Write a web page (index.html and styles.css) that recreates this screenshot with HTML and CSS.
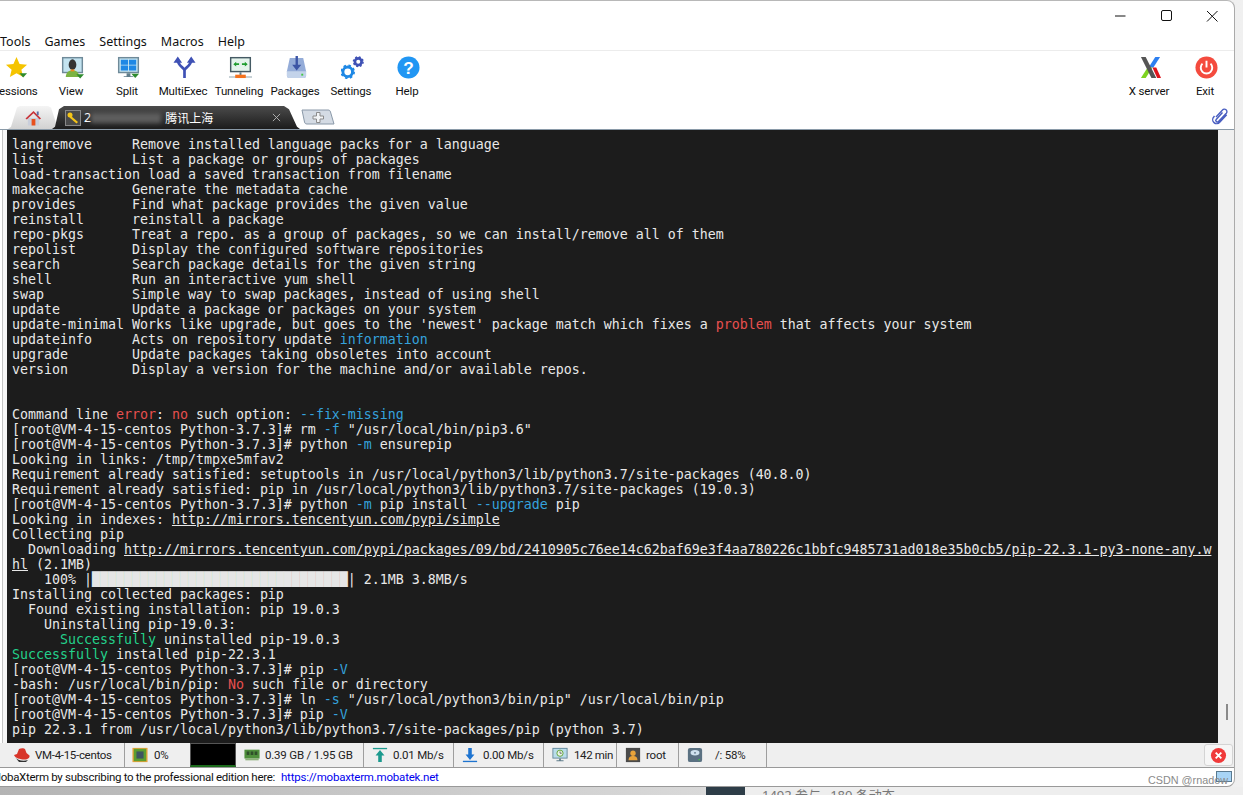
FILE: index.html
```html
<!DOCTYPE html>
<html lang="en">
<head>
    <meta charset="UTF-8">
    <title>MobaXterm</title>
    <link rel="stylesheet" href="styles.css">
</head>
<body>
    <div class="window">
        <div class="titlebar">
            <svg class="win-btn" viewBox="0 0 46 30"><path d="M20 15h10.500" stroke="#111" fill="none"/></svg>
            <svg class="win-btn" viewBox="0 0 46 30"><rect x="20.500" y="9.500" width="10" height="10" rx="1.500" stroke="#111" fill="none"/></svg>
            <svg class="win-btn" viewBox="0 0 46 30"><path d="M20 10l10.500 10.500M30.500 10L20 20.500" stroke="#111" fill="none"/></svg>
        </div>

        <div class="menubar">
            <span>Tools</span><span>Games</span><span>Settings</span><span>Macros</span><span>Help</span>
        </div>

        <div class="toolbar">
            <div class="tool">
                <svg viewBox="0 0 24 24"><path d="M12 1l3.200 7.300 7.800.8-5.900 5.200 1.800 7.700L12 18l-6.900 4 1.800-7.700L1 9.100l7.800-.8z" fill="#f5c400"/><path d="M15 18h8l-4 4.500z" fill="#2e8b2e"/></svg>
                <span>Sessions</span>
            </div>
            <div class="tool">
                <svg viewBox="0 0 24 24"><rect x="1" y="1" width="22" height="17" fill="#6f8a99"/><rect x="2.500" y="2.500" width="19" height="14" fill="#c3e3f0"/><path d="M5 22c0-5 3-7 7-7s7 2 7 7z" fill="#7cb342"/><ellipse cx="12" cy="9" rx="4" ry="5.500" fill="#333"/><rect x="10" y="14" width="4" height="2" fill="#ef8a1f"/><path d="M16 19h8l-4 4.500z" fill="#2e8b2e"/></svg>
                <span>View</span>
            </div>
            <div class="tool">
                <svg viewBox="0 0 24 24"><rect x="1" y="1" width="22" height="17" fill="#6f8a99"/><rect x="2.500" y="2.500" width="19" height="14" fill="#c3e3f0"/><path d="M4 4h7.500v5H4zM12.500 4H20v5h-7.500zM4 10h7.500v5H4zM12.500 10H20v5h-7.500z" fill="#1e88e5"/><path d="M10 18h4v3h-4zM7 21h10v1H7z" fill="#607d8b"/><path d="M15 18.500h8l-4 4.500z" fill="#2e8b2e"/></svg>
                <span>Split</span>
            </div>
            <div class="tool">
                <svg viewBox="0 0 24 24"><path d="M12 23v-8c0-3-7-4-7-11M12 15c0-3 7-4 7-11" stroke="#3f51b5" stroke-width="2.800" fill="none"/><path d="M0.500 7L5 0.500 9.500 7zM14.500 7L19 0.500 23.500 7z" fill="#3f51b5"/></svg>
                <span>MultiExec</span>
            </div>
            <div class="tool">
                <svg viewBox="0 0 24 24"><rect x="1" y="1" width="22" height="16" fill="#455a64"/><rect x="2.500" y="2.500" width="19" height="13" fill="#e4f3ec"/><path d="M4.500 8.500l3-2.500v1.500h3v2h-3V11zM19.500 8.500l-3-2.500v1.500h-3v2h3V11z" fill="#1f9d2f"/><path d="M0 21.500h24v1H0z" fill="#90a4ae"/><path d="M11 17h2v3h-2z" fill="#607d8b"/><rect x="6.500" y="19.500" width="11" height="3.500" fill="#f4721e"/></svg>
                <span>Tunneling</span>
            </div>
            <div class="tool">
                <svg viewBox="0 0 24 24"><path d="M5 2h14l3 14v4a3 3 0 0 1-3 3H5a3 3 0 0 1-3-3v-4z" fill="#94acd8"/><path d="M2 16h20v4a3 3 0 0 1-3 3H5a3 3 0 0 1-3-3z" fill="#c3d3ea"/><path d="M11 0h2.500v9H17l-4.800 6-4.700-6H11z" fill="#3c55a5"/><rect x="17" y="18.500" width="2" height="2" fill="#43c943"/></svg>
                <span>Packages</span>
            </div>
            <div class="tool">
                <svg viewBox="0 0 24 24"><circle cx="7" cy="16.500" r="5" fill="none" stroke="#1e88e5" stroke-width="3"/><circle cx="7" cy="16.500" r="6.700" fill="none" stroke="#1e88e5" stroke-width="1.800" stroke-dasharray="2.600 2.660"/><circle cx="18" cy="6" r="3.500" fill="none" stroke="#3f51b5" stroke-width="2.800"/><circle cx="18" cy="6" r="5" fill="none" stroke="#3f51b5" stroke-width="1.600" stroke-dasharray="2 1.930"/></svg>
                <span>Settings</span>
            </div>
            <div class="tool">
                <svg viewBox="0 0 24 24"><circle cx="12" cy="12" r="11.500" fill="#2196f3"/><text x="12" y="18.500" class="help-mark">?</text></svg>
                <span>Help</span>
            </div>
            <div class="tool-gap"></div>
            <div class="tool">
                <svg viewBox="0 0 24 24"><path d="M17 1h5l-7 11h-5z" fill="#2d7ff0"/><path d="M9 12h5L7 23H2z" fill="#7ed321"/><path d="M14 12h4l5 11h-4z" fill="#e0141c"/><path d="M2 1h5l11 22h-5z" fill="#555"/></svg>
                <span>X server</span>
            </div>
            <div class="tool">
                <svg viewBox="0 0 24 24"><circle cx="12" cy="12" r="11.500" fill="#f44b3e"/><path d="M7.800 8a6 6 0 1 0 8.400 0" stroke="#fff" stroke-width="2" fill="none"/><path d="M12 5v7" stroke="#fff" stroke-width="2"/></svg>
                <span>Exit</span>
            </div>
        </div>

        <div class="tabs">
            <div class="tab-home">
                <svg class="home-icon" viewBox="0 0 18 18"><path d="M3 9h12v8H3z" fill="#c9cedb"/><path d="M7 10h4v7H7z" fill="#e8501e"/><path d="M0.500 9.500L9 1.500l8 8-1.500 1L9 4l-7 6.500z" fill="#c8343a"/><path d="M12.500 2h2v4h-2z" fill="#5a6fa8"/></svg>
            </div>
            <div class="tab-active">
                <svg class="key-icon" viewBox="0 0 16 16"><rect x="0.500" y="0.500" width="15" height="15" fill="#4a4a4a" stroke="#888"/><circle cx="5" cy="5" r="2.500" fill="#f5c518"/><path d="M6 6l7 6-1.500 1.500-7-6z" fill="#f5c518"/></svg>
                <span class="tab-num">2</span>
                <span class="tab-mask"></span>
                <span class="tab-name">腾讯上海</span>
                <svg class="tab-close" viewBox="0 0 10 10"><path d="M1 1l8 8M9 1l-8 8" stroke="#b8b8b8" fill="none"/></svg>
            </div>
            <svg class="tab-plus" viewBox="0 0 34 16"><path d="M1 1h26c1.500 0 2 .5 2.500 2L33 15H6C4.500 15 4 14.500 3.500 13z" fill="#d4dbe4" stroke="#8a98a8"/><path d="M15.500 3.500h3.500v3.500h3.500v3H19v3.500h-3.500V10H12V7h3.500z" fill="#f2f4f6" stroke="#8b8b8b"/></svg>
            <svg class="clip-icon" viewBox="0 0 18 18"><path d="M5 10l6.500-7a2.500 2.500 0 0 1 3.800 3.300L7.500 14.500a1.500 1.500 0 0 1-2.300-2l6.300-7M3.500 9L2.700 10a4 4 0 0 0 6 5.300l7-7.500" stroke="#4a5fc1" stroke-width="1.400" fill="none"/></svg>
        </div>

        <div class="term-row">
            <div class="gutter"></div>
<pre class="terminal">langremove     Remove installed language packs for a language
list           List a package or groups of packages
load-transaction load a saved transaction from filename
makecache      Generate the metadata cache
provides       Find what package provides the given value
reinstall      reinstall a package
repo-pkgs      Treat a repo. as a group of packages, so we can install/remove all of them
repolist       Display the configured software repositories
search         Search package details for the given string
shell          Run an interactive yum shell
swap           Simple way to swap packages, instead of using shell
update         Update a package or packages on your system
update-minimal Works like upgrade, but goes to the 'newest' package match which fixes a <span class="t-red">problem</span> that affects your system
updateinfo     Acts on repository update <span class="t-cyan">information</span>
upgrade        Update packages taking obsoletes into account
version        Display a version for the machine and/or available repos.


Command line <span class="t-red">error</span>: <span class="t-red">no</span> such option: <span class="t-cyan">--fix-missing</span>
[root@VM-4-15-centos Python-3.7.3]# rm <span class="t-cyan">-f</span> "/usr/local/bin/pip3.6"
[root@VM-4-15-centos Python-3.7.3]# python <span class="t-cyan">-m</span> ensurepip
Looking in links: /tmp/tmpxe5mfav2
Requirement already satisfied: setuptools in /usr/local/python3/lib/python3.7/site-packages (40.8.0)
Requirement already satisfied: pip in /usr/local/python3/lib/python3.7/site-packages (19.0.3)
[root@VM-4-15-centos Python-3.7.3]# python <span class="t-cyan">-m</span> pip install <span class="t-cyan">--upgrade</span> pip
Looking in indexes: <u>http://mirrors.tencentyun.com/pypi/simple</u>
Collecting pip
  Downloading <u>http://mirrors.tencentyun.com/pypi/packages/09/bd/2410905c76ee14c62baf69e3f4aa780226c1bbfc9485731ad018e35b0cb5/pip-22.3.1-py3-none-any.w</u>
<u>hl</u> (2.1MB)
    100% |<span class="t-bar">████████████████████████████████</span>| 2.1MB 3.8MB/s
Installing collected packages: pip
  Found existing installation: pip 19.0.3
    Uninstalling pip-19.0.3:
      <span class="t-green">Successfully</span> uninstalled pip-19.0.3
<span class="t-green">Successfully</span> installed pip-22.3.1
[root@VM-4-15-centos Python-3.7.3]# pip <span class="t-cyan">-V</span>
-bash: /usr/local/bin/pip: <span class="t-red">No</span> such file or directory
[root@VM-4-15-centos Python-3.7.3]# ln <span class="t-cyan">-s</span> "/usr/local/python3/bin/pip" /usr/local/bin/pip
[root@VM-4-15-centos Python-3.7.3]# pip <span class="t-cyan">-V</span>
pip 22.3.1 from /usr/local/python3/lib/python3.7/site-packages/pip (python 3.7)</pre>
            <div class="scrollbar"><div class="scroll-thumb"></div></div>
        </div>

        <div class="statusbar">
            <div class="stat stat-host">
                <svg viewBox="0 0 18 18"><path d="M1 9l3-1 2-5c2-1 5-1 6 0l1.500 4 3 2.500c.5 2-1.500 4-5 4C7 13.500 2 12 1 9z" fill="#d8352a"/><path d="M2 11c2 3 8 5 13 3l-2 2H6z" fill="#333"/></svg>
                <span>VM-4-15-centos</span>
            </div>
            <div class="stat stat-cpu">
                <svg viewBox="0 0 18 18"><rect x="0.500" y="1" width="17" height="16" fill="#e8a33a"/><rect x="2" y="2" width="14" height="14" fill="#5d9e2f"/><rect x="5" y="5" width="8" height="8" fill="#3f5560"/></svg>
                <span>0%</span>
                <div class="cpu-graph"></div>
            </div>
            <div class="stat stat-ram">
                <svg viewBox="0 0 18 18"><rect x="0.500" y="3" width="17" height="10" fill="#4f8f3c"/><path d="M3 5h3v4H3zM7.500 5h3v4h-3zM12 5h3v4h-3z" fill="#2f4f2a"/><rect x="1.500" y="13" width="15" height="2" fill="#8db27a"/></svg>
                <span>0.39 GB / 1.95 GB</span>
            </div>
            <div class="stat stat-up">
                <svg viewBox="0 0 18 18"><path d="M1 1h16v1.500H1z" fill="#1c9a8e"/><path d="M9 3.500l5 6h-3V17H7V9.500H4z" fill="#1c9a8e"/></svg>
                <span>0.01 Mb/s</span>
            </div>
            <div class="stat stat-down">
                <svg viewBox="0 0 18 18"><path d="M7 1h4v7.500h3l-5 6-5-6h3z" fill="#1e74d0"/><path d="M1 15.500h16V17H1z" fill="#1e74d0"/></svg>
                <span>0.00 Mb/s</span>
            </div>
            <div class="stat stat-time">
                <svg viewBox="0 0 18 18"><rect x="0.500" y="1" width="17" height="12" fill="#5f8496"/><rect x="1.500" y="2" width="15" height="10" fill="#b9dcea"/><circle cx="9" cy="7" r="3.500" fill="#e8f4e4" stroke="#5d9e2f"/><path d="M9 5v2h2" stroke="#444" stroke-width=".8" fill="none"/><path d="M8 13h2v2H8zM5 15h8v1H5z" fill="#607d8b"/></svg>
                <span>142 min</span>
            </div>
            <div class="stat stat-user">
                <svg viewBox="0 0 18 18"><rect x="1" y="1" width="16" height="16" fill="#4a4a4a"/><circle cx="9" cy="7" r="3" fill="#e8a33a"/><path d="M4 15c0-4 2-5 5-5s5 1 5 5z" fill="#e8a33a"/></svg>
                <span>root</span>
            </div>
            <div class="stat stat-disk">
                <svg viewBox="0 0 18 18"><rect x="1" y="1" width="16" height="16" rx="2.500" fill="#5a7182"/><ellipse cx="9" cy="6.500" rx="5" ry="3" fill="#cfe2ee"/><circle cx="9" cy="6.500" r="1" fill="#5a7182"/><rect x="13" y="13.500" width="1.500" height="1.500" fill="#43c943"/></svg>
                <span>/: 58%</span>
            </div>
            <div class="stat-close">
                <svg viewBox="0 0 18 18"><circle cx="9" cy="9" r="8" fill="#f03a3a"/><path d="M6 6l6 6M12 6l-6 6" stroke="#fff" stroke-width="2"/></svg>
            </div>
        </div>

        <div class="notice">
            <span class="notice-text">MobaXterm by subscribing to the professional edition here:</span>
            <span class="notice-link">https://mobaxterm.mobatek.net</span>
            <div class="task-icon"></div>
            <div class="watermark">CSDN @rnadow</div>
        </div>
    </div>

    <div class="behind">
        <div class="behind-thumb"></div>
        <span>1492 参与</span>
        <span>180 条动态</span>
    </div>
</body>
</html>
```
FILE: styles.css
```css
* {
    margin: 0;
    padding: 0;
    box-sizing: border-box;
}

html, body {
    height: 795px;
    overflow: hidden;
}

body {
    width: 1243px;
    background: linear-gradient(to right, #b4b4b4, #d8d8d8 55%, #f0f0f0);
    font-family: 'Noto Sans', 'Noto Sans CJK SC', sans-serif;
    color: #111;
}

.window {
    width: 1235px;
    height: 787px;
    display: flex;
    flex-direction: column;
    background: #fff;
    border-top: 1px solid #b8b8b8;
    border-right: 1px solid #aaa;
    border-bottom: 1px solid #999;
    border-radius: 0 8px 8px 0;
    overflow: hidden;
}

.titlebar {
    height: 32px;
    display: flex;
    justify-content: flex-end;
    align-items: flex-start;
    padding-right: 1px;
}

.win-btn {
    width: 46px;
    height: 30px;
}

.menubar {
    height: 18px;
    display: flex;
    gap: 14px;
    align-items: center;
    font-size: 12.5px;
    border-bottom: 1px solid #ececec;
    padding-bottom: 1px;
}

.toolbar {
    height: 54px;
    display: flex;
    margin-left: -13px;
    padding: 5px 1px 0 0;
}

.tool {
    width: 56px;
    display: flex;
    flex-direction: column;
    align-items: center;
    flex-shrink: 0;
}

.tool svg {
    width: 23px;
    height: 23px;
    margin-left: 2px;
}

.tool span {
    font-family: Roboto, sans-serif;
    font-size: 11.5px;
    letter-spacing: -0.15px;
    line-height: 16px;
    margin-top: 4px;
    white-space: nowrap;
}

.tool-gap {
    flex: 1;
}

.help-mark {
    font-family: 'Liberation Sans', sans-serif;
    font-size: 18px;
    font-weight: 700;
    fill: #fff;
    text-anchor: middle;
}

.tabs {
    height: 25px;
    display: flex;
    align-items: flex-end;
    position: relative;
    padding-left: 8px;
    border-bottom: 1px solid #8a9aa8;
}

.tab-home {
    width: 50px;
    height: 23px;
    display: flex;
    justify-content: center;
    align-items: center;
    background: linear-gradient(#f4f4f4, #d2d2d2);
    clip-path: polygon(0 100%, 3px 90%, 9px 6%, 12px 0, 40px 0, 43px 6%, 50px 100%);
    padding-left: 1px;
}

.home-icon {
    width: 17px;
    height: 18px;
}

.tab-active {
    width: 248px;
    height: 23px;
    margin-left: -6px;
    display: flex;
    align-items: center;
    color: #fff;
    font-size: 12.5px;
    background: linear-gradient(#4b4b4b, #1c1c1c);
    clip-path: polygon(0 100%, 3px 90%, 7px 14%, 12px 0, 232px 0, 237px 14%, 245px 90%, 248px 100%);
    padding-left: 13px;
}

.key-icon {
    width: 16px;
    height: 16px;
}

.tab-num {
    margin-left: 3px;
}

.tab-mask {
    width: 70px;
    height: 10px;
    background: #5e5e5e;
    filter: blur(2px);
}

.tab-name {
    margin-left: 4px;
    font-size: 12px;
    font-family: 'Noto Sans CJK SC', sans-serif;
}

.tab-close {
    width: 9px;
    height: 9px;
    margin-left: 59px;
}

.tab-plus {
    width: 34px;
    height: 16px;
    margin: 0 0 4px 1px;
}

.clip-icon {
    position: absolute;
    right: 5px;
    bottom: 4px;
    width: 18px;
    height: 18px;
}

.term-row {
    height: 613px;
    display: flex;
}

.gutter {
    width: 7px;
    background: #f6f6f6;
    border-left: 2px solid #fff;
    box-shadow: inset 1px 0 0 #c4c4c4;
}

.terminal {
    width: 1211px;
    background: #1c1c1c;
    color: #e8e8e8;
    font-family: 'DejaVu Sans Mono', monospace;
    font-size: 13.29px;
    line-height: 15px;
    padding: 7px 0 0 5px;
    overflow: hidden;
}

.t-red {
    color: #e8504f;
}

.t-cyan {
    color: #35a2dc;
}

.t-green {
    color: #23d18b;
}

.t-bar {
    color: #e6e6e6;
}

.scrollbar {
    width: 16px;
    background: #f0f0f0;
    position: relative;
}

.scroll-thumb {
    position: absolute;
    left: 8px;
    top: 574px;
    width: 2px;
    height: 16px;
    background: #8a8a8a;
}

.statusbar {
    height: 25px;
    display: flex;
    background: #efefef;
    border-bottom: 1px solid #999;
    font-family: Roboto, sans-serif;
    font-size: 11.5px;
    letter-spacing: -0.2px;
    color: #222;
    position: relative;
}

.stat {
    display: flex;
    align-items: center;
    gap: 5px;
    border-right: 1px solid #9e9e9e;
    padding-left: 8px;
    flex-shrink: 0;
    white-space: nowrap;
}

.stat svg {
    width: 16px;
    height: 16px;
    flex-shrink: 0;
}

.stat-host { width: 125px; padding-left: 13px; gap: 4px; letter-spacing: -0.3px; }
.stat-host svg { width: 18px; height: 18px; }
.stat-cpu { width: 115px; padding-left: 7px; gap: 6px; border-right: none; }
.stat-ram { width: 124px; padding-left: 4px; }
.stat-up { width: 90px; }
.stat-down { width: 90px; }
.stat-time { width: 73px; gap: 6px; letter-spacing: -0.35px; }
.stat-user { width: 62px; }
.stat-disk { width: 88px; gap: 12px; }

.cpu-graph {
    width: 46px;
    height: 24px;
    margin-left: auto;
    margin-right: 4px;
    background: #000;
    border: 1px solid #555;
    border-bottom: 2px solid #1b6b1b;
}

.stat-close {
    position: absolute;
    right: 1px;
    top: 1px;
    width: 29px;
    height: 22px;
    display: flex;
    align-items: center;
    justify-content: center;
    background: #f6f6f6;
    border: 1px solid #d4d4d4;
    border-radius: 3px;
}

.stat-close svg {
    width: 17px;
    height: 17px;
}

.notice {
    flex: 1;
    display: flex;
    align-items: center;
    font-family: Roboto, sans-serif;
    font-size: 11.5px;
    letter-spacing: -0.3px;
    margin-left: -9px;
    gap: 6px;
    position: relative;
}

.notice-link {
    color: #0000ee;
    letter-spacing: -0.2px;
}

.task-icon {
    position: absolute;
    right: 2px;
    top: 3px;
    width: 16px;
    height: 11px;
    background: #a8d4f5;
    border: 1px solid #5a7a90;
}

.watermark {
    position: absolute;
    right: 6px;
    top: 5px;
    font-family: 'Liberation Sans', sans-serif;
    font-size: 10.8px;
    letter-spacing: 0;
    line-height: 15px;
    color: #8a8a8a;
}

.behind {
    height: 8px;
    display: flex;
    gap: 9px;
    padding-left: 706px;
    font-size: 13px;
    line-height: 16px;
    color: #777;
    overflow: hidden;
    background: linear-gradient(to right, transparent 700px, #eee 750px);
}

.behind-thumb {
    width: 39px;
    height: 8px;
    margin-right: 8px;
    background: #2e3d48;
}
```
